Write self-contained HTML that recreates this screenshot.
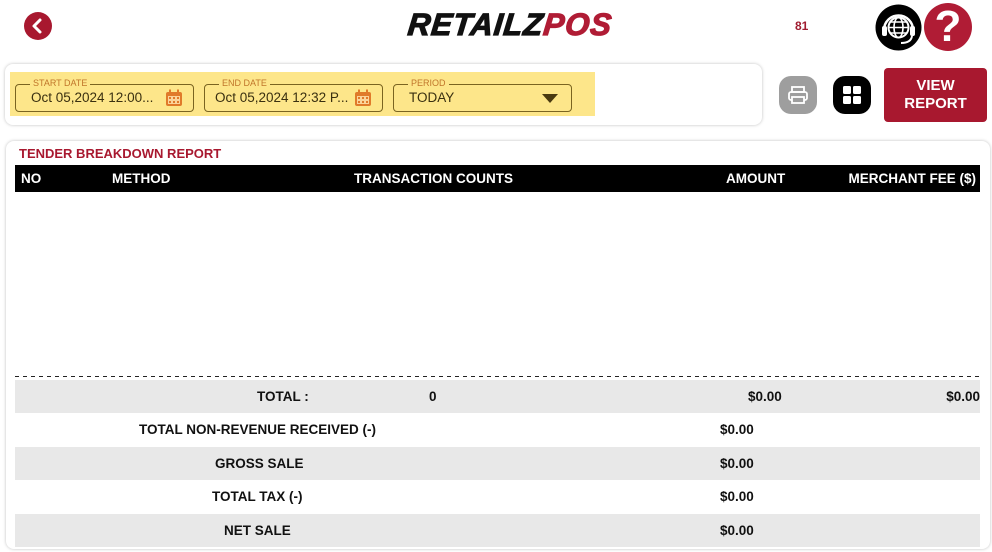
<!DOCTYPE html>
<html><head><meta charset="utf-8">
<style>
*{margin:0;padding:0;box-sizing:border-box}
body{width:992px;height:552px;background:#fff;font-family:"Liberation Sans",Arial,sans-serif;position:relative;overflow:hidden;color:#111}
.abs{position:absolute}
.card{position:absolute;background:#fff;border-radius:8px;box-shadow:0 0 3px rgba(0,0,0,.25)}
.fld{position:absolute;top:84px;height:28px;border:1.5px solid #7a6420;border-radius:4px}
.fld .lb{position:absolute;top:-8px;left:14px;background:#fde68a;padding:0 3px;font-size:9px;color:#c0752a;line-height:12px}
.fld .v{position:absolute;left:15px;top:5px;font-size:13.5px;color:#3a3010}
.cal{position:absolute;right:10px;top:4px;width:18px;height:18px}
.th{position:absolute;top:165px;left:15px;width:965px;height:27px;background:#000;color:#fff;font-weight:bold;font-size:13.5px}
.th span{position:absolute;top:6px}
.row{position:absolute;left:15px;width:965px;height:33px;font-weight:bold;font-size:13.5px}
.row span{position:absolute;top:9px}
.g{background:#e8e8e8}
</style></head><body>
<div class="abs" style="left:24px;top:12px;width:28px;height:28px;border-radius:50%;background:#a8182f">
<svg width="28" height="28" viewBox="0 0 28 28"><path d="M16 8 L10 14 L16 20" stroke="#fff" stroke-width="3" fill="none" stroke-linecap="round" stroke-linejoin="round"/></svg></div>
<div class="abs" style="left:408px;top:7px;font-size:31px;font-weight:900;font-style:italic;letter-spacing:1px;transform:skewX(-6deg);-webkit-text-stroke:1.2px currentColor"><span style="color:#111">RETAILZ</span><span style="color:#b01c35">POS</span></div>
<div class="abs" style="left:795px;top:19px;font-size:12px;font-weight:bold;color:#a01c30">81</div>
<svg class="abs" style="left:875px;top:4px" width="47" height="47" viewBox="0 0 47 47">
<circle cx="23.5" cy="23.5" r="23" fill="#000"/>
<path d="M9 26 A14.5 14.5 0 0 1 38 26" stroke="#fff" stroke-width="2.5" fill="none"/>
<rect x="7" y="22" width="5" height="10" rx="2" fill="#fff"/><rect x="35" y="22" width="5" height="10" rx="2" fill="#fff"/>
<path d="M37 32 Q36 39 26 39" stroke="#fff" stroke-width="2" fill="none"/>
<circle cx="23.5" cy="23.5" r="10" fill="none" stroke="#fff" stroke-width="2"/>
<ellipse cx="23.5" cy="23.5" rx="4.5" ry="10" fill="none" stroke="#fff" stroke-width="1.6"/>
<path d="M13.5 23.5H33.5M15 18H32M15 29H32" stroke="#fff" stroke-width="1.6"/>
</svg>
<div class="abs" style="left:924px;top:3px;width:48px;height:48px;border-radius:50%;background:#b01c35;color:#fff;font-size:44px;font-weight:900;text-align:center;line-height:48px">?</div>

<div class="card" style="left:5px;top:64px;width:757px;height:61px"></div>
<div class="abs" style="left:10px;top:72px;width:585px;height:44px;background:#fde68a"></div>
<div class="fld" style="left:15px;width:179px"><div class="lb">START DATE</div><div class="v">Oct 05,2024 12:00...</div>
<svg class="cal" viewBox="0 0 18 18"><rect x="1" y="3" width="16" height="14" rx="2" fill="#e07a2a"/><rect x="4" y="0.5" width="2" height="4" fill="#e07a2a"/><rect x="12" y="0.5" width="2" height="4" fill="#e07a2a"/><rect x="3" y="7" width="12" height="8" fill="#fbd49a"/><g fill="#e07a2a"><rect x="4" y="8" width="2" height="2"/><rect x="8" y="8" width="2" height="2"/><rect x="12" y="8" width="2" height="2"/><rect x="4" y="12" width="2" height="2"/><rect x="8" y="12" width="2" height="2"/><rect x="12" y="12" width="2" height="2"/></g></svg></div>
<div class="fld" style="left:204px;width:179px"><div class="lb">END DATE</div><div class="v" style="left:10px">Oct 05,2024 12:32 P...</div>
<svg class="cal" viewBox="0 0 18 18"><rect x="1" y="3" width="16" height="14" rx="2" fill="#e07a2a"/><rect x="4" y="0.5" width="2" height="4" fill="#e07a2a"/><rect x="12" y="0.5" width="2" height="4" fill="#e07a2a"/><rect x="3" y="7" width="12" height="8" fill="#fbd49a"/><g fill="#e07a2a"><rect x="4" y="8" width="2" height="2"/><rect x="8" y="8" width="2" height="2"/><rect x="12" y="8" width="2" height="2"/><rect x="4" y="12" width="2" height="2"/><rect x="8" y="12" width="2" height="2"/><rect x="12" y="12" width="2" height="2"/></g></svg></div>
<div class="fld" style="left:393px;width:179px"><div class="lb">PERIOD</div><div class="v">TODAY</div>
<svg class="abs" style="left:148px;top:9px" width="16" height="9"><path d="M0 0H16L8 9Z" fill="#4a3a10"/></svg></div>

<div class="abs" style="left:779px;top:76px;width:38px;height:38px;border-radius:12px;background:#9e9e9e">
<svg width="38" height="38" viewBox="0 0 38 38"><rect x="13" y="11" width="12" height="5" fill="none" stroke="#fff" stroke-width="1.8"/><rect x="10" y="16" width="18" height="8" rx="2" fill="none" stroke="#fff" stroke-width="1.8"/><rect x="13" y="21" width="12" height="6" fill="#9e9e9e" stroke="#fff" stroke-width="1.8"/></svg></div>
<div class="abs" style="left:833px;top:76px;width:38px;height:38px;border-radius:12px;background:#000">
<svg width="38" height="38"><rect x="10" y="10" width="8" height="8" rx="1.5" fill="#fff"/><rect x="20" y="10" width="8" height="8" rx="1.5" fill="#fff"/><rect x="10" y="20" width="8" height="8" rx="1.5" fill="#fff"/><rect x="20" y="20" width="8" height="8" rx="1.5" fill="#fff"/></svg></div>
<div class="abs" style="left:884px;top:68px;width:103px;height:54px;border-radius:4px;background:#a8182f;color:#fff;font-weight:bold;font-size:15px;text-align:center;line-height:18px;padding-top:9px">VIEW<br>REPORT</div>

<div class="card" style="left:6px;top:141px;width:984px;height:408px"></div>
<div class="abs" style="left:19px;top:146px;font-size:13px;font-weight:bold;color:#a8182f">TENDER BREAKDOWN REPORT</div>
<div class="th"><span style="left:6px">NO</span><span style="left:97px">METHOD</span><span style="left:339px">TRANSACTION COUNTS</span><span style="left:711px">AMOUNT</span><span style="right:4px">MERCHANT FEE ($)</span></div>
<div class="abs" style="left:15px;top:376px;width:965px;height:1px;background:repeating-linear-gradient(90deg,#222 0 4px,transparent 4px 8px)"></div>
<div class="row g" style="top:380px"><span style="left:242px">TOTAL :</span><span style="left:414px">0</span><span style="left:733px">$0.00</span><span style="right:0">$0.00</span></div>
<div class="row" style="top:413px"><span style="left:124px">TOTAL NON-REVENUE RECEIVED (-)</span><span style="left:705px">$0.00</span></div>
<div class="row g" style="top:447px"><span style="left:200px">GROSS SALE</span><span style="left:705px">$0.00</span></div>
<div class="row" style="top:480px"><span style="left:197px">TOTAL TAX (-)</span><span style="left:705px">$0.00</span></div>
<div class="row g" style="top:514px"><span style="left:209px">NET SALE</span><span style="left:705px">$0.00</span></div>
</body></html>
